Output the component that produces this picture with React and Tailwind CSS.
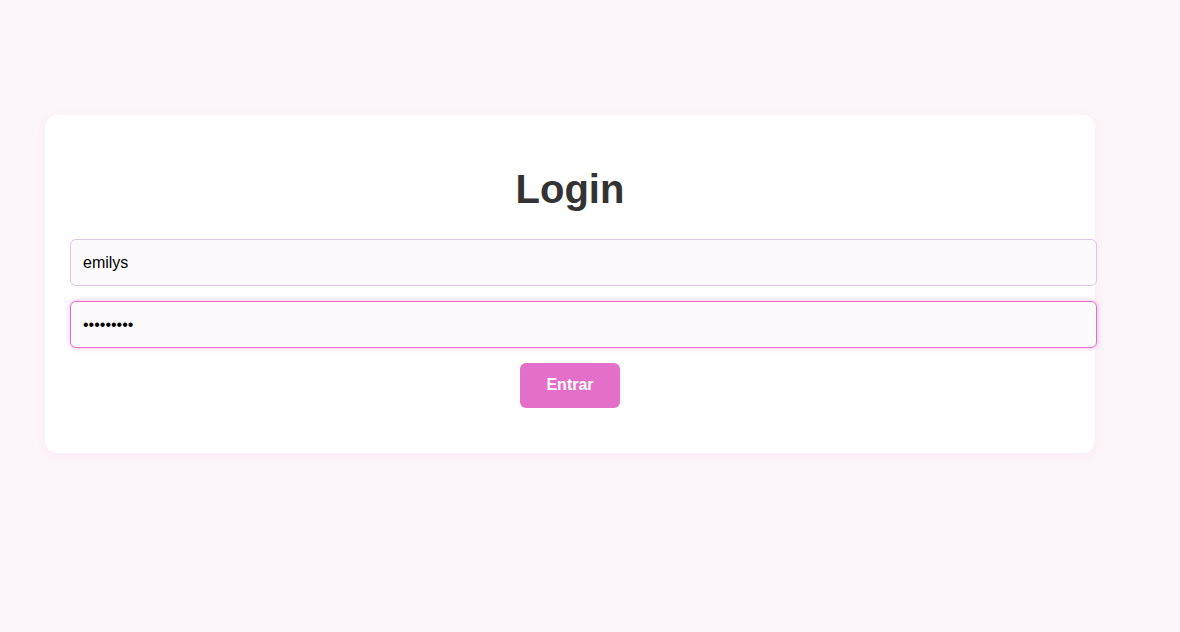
import { useEffect, useRef } from 'react';

const App = () => {
  const passRef = useRef(null);

  useEffect(() => {
    const el = passRef.current;
    if (el) {
      el.focus();
      el.setSelectionRange(el.value.length, el.value.length);
    }
  }, []);

  return (
    <div className="min-h-screen bg-[#fcf5f9] pt-[115px] pl-[45px] font-['Liberation_Sans',Arial,sans-serif]">
      <div className="w-[1050px] h-[338px] bg-white rounded-xl shadow-[0_2px_10px_rgba(228,111,201,0.08)] px-[25px] pt-[51px]">
        <h1 className="text-center text-[40px] leading-[46px] font-bold text-[#333333]">Login</h1>
        <form className="mt-[27px] flex flex-col" onSubmit={(e) => e.preventDefault()}>
          <input
            type="text"
            defaultValue="emilys"
            className="w-[1027px] h-[47px] px-[12px] text-[16px] text-black bg-[#fdfafd] border border-[#dcc6e6] rounded-md outline-none"
          />
          <input
            ref={passRef}
            type="password"
            defaultValue="emilyspas"
            className="mt-[15px] w-[1027px] h-[47px] px-[12px] text-[16px] text-black bg-[#fdfafd] border border-[#e46fc9] rounded-md outline-none shadow-[0_0_5px_rgba(228,111,201,0.5)] caret-black"
          />
          <button
            type="submit"
            className="mt-[15px] mx-auto w-[100px] h-[45px] rounded-md bg-[#e46fc9] text-white text-[16px] font-bold leading-[18px] pb-[1px]"
          >
            Entrar
          </button>
        </form>
      </div>
    </div>
  );
};

export default App;
